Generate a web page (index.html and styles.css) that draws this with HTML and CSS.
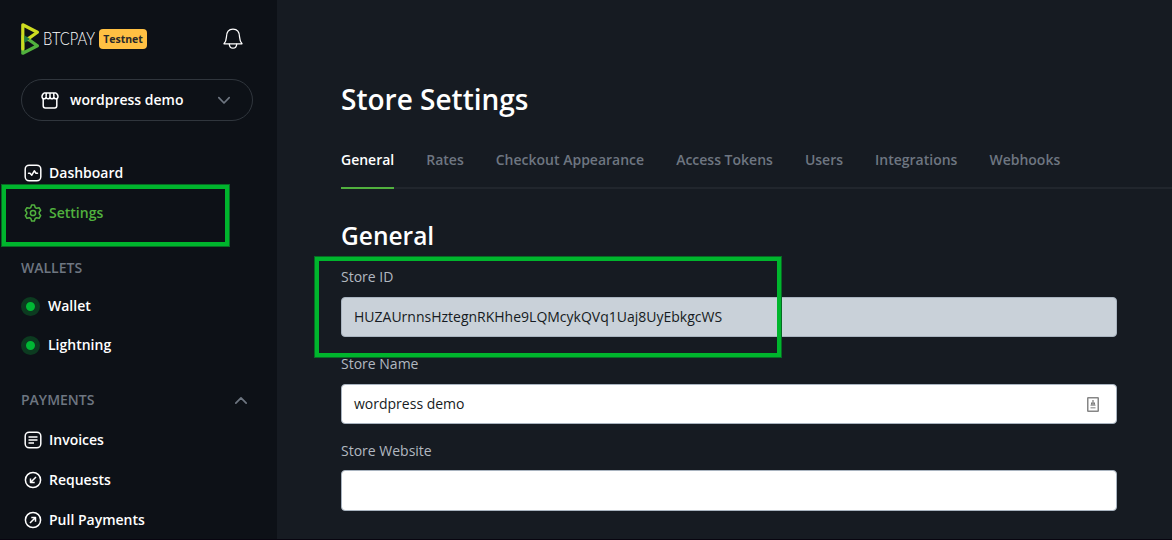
FILE: index.html
```html
<!DOCTYPE html>
<html lang="en">
<head>
<meta charset="utf-8">
<title>Store Settings</title>
<link rel="stylesheet" href="styles.css">
</head>
<body>
<div class="app">
  <aside class="sidebar">
    <header class="brand">
      <svg class="logo" width="18" height="32" viewBox="0 0 18 32" fill="none" stroke-linejoin="round" stroke-linecap="round">
        <path d="M1.800 30.200V13M1.800 30.200L16.400 22.800L6 15.400" stroke="#51b13e" stroke-width="3.200"/>
        <path d="M1.800 26V1.800L16.400 9.200L6 16.600" stroke="#cedc21" stroke-width="3.200"/>
        <path d="M3.400 12.300L9 16L3.400 20Z" fill="#1e7a44"/>
      </svg>
      <svg class="wordmark" width="56" height="24" viewBox="0 0 56 24"><text x="1" y="18" textLength="52" lengthAdjust="spacingAndGlyphs">BTCPAY</text></svg>
      <span class="badge">Testnet</span>
      <svg class="bell" width="20" height="22" viewBox="0 0 20 22" fill="none" stroke="#fff" stroke-width="1.300" stroke-linejoin="round" stroke-linecap="round">
        <path d="M1 15.800C2.600 14 3.200 12.400 3.400 9.200C3.500 4.300 5.600 1.200 10 1.200S16.500 4.300 16.600 9.200C16.800 12.400 17.400 14 19 15.800Z"/>
        <path d="M6.300 16.200C6.500 18.800 7.800 20.200 10 20.200S13.500 18.800 13.700 16.200"/>
      </svg>
    </header>
    <div class="store-picker">
      <svg width="18" height="17" viewBox="0 0 18 17" fill="none" stroke="#fff" stroke-width="1.500" stroke-linejoin="round">
        <path d="M3.300 1H14.700C15.500 1 17 3.200 17 4.400C17 7.500 12.900 7.500 12.900 4.400C12.900 7.500 9 7.500 9 4.400C9 7.500 5.100 7.500 5.100 4.400C5.100 7.500 1 7.500 1 4.400C1 3.200 2.500 1 3.300 1ZM5.300 1L5.100 4.400M9 1V4.400M12.700 1L12.900 4.400"/>
        <path d="M2.200 6.700V13.800Q2.200 15.900 4.300 15.900H13.700Q15.800 15.900 15.800 13.800V6.700"/>
      </svg>
      <span class="store-name">wordpress demo</span>
      <svg width="14" height="9" viewBox="0 0 14 9" fill="none" stroke="#6e7681" stroke-width="1.700" stroke-linecap="round" stroke-linejoin="round"><path d="M1.800 1.700L7 7L12.200 1.700"/></svg>
    </div>
    <nav class="menu menu-main">
      <a class="item"><svg width="18" height="18" viewBox="0 0 18 18" fill="none" stroke="currentColor" stroke-width="1.500" stroke-linejoin="round" stroke-linecap="round"><rect x="1.200" y="1.200" width="15.600" height="15.600" rx="4"/><path d="M4.500 9.200H6L7.800 11.200L10.300 6.800L12 9.200H13.500"/></svg>Dashboard</a>
      <a class="item active"><svg width="18" height="18" viewBox="0 0 18 18" fill="none" stroke="currentColor" stroke-width="1.500" stroke-linejoin="round"><path d="M7.600 1.100H10.400L11.200 3.500L12.600 4.300L15.100 3.700L16.700 6.300L15.200 8.200V9.800L16.700 11.700L15.100 14.300L12.600 13.700L11.200 14.500L10.400 16.900H7.600L6.800 14.500L5.400 13.700L2.900 14.300L1.300 11.700L2.800 9.800V8.200L1.300 6.300L2.900 3.700L5.400 4.300L6.800 3.500Z"/><circle cx="9" cy="9" r="2.600"/></svg>Settings</a>
    </nav>
    <h3 class="section">WALLETS</h3>
    <nav class="menu wallets">
      <a class="item"><span class="status"></span>Wallet</a>
      <a class="item"><span class="status"></span>Lightning</a>
    </nav>
    <h3 class="section payments">PAYMENTS
      <svg width="14" height="9" viewBox="0 0 14 9" fill="none" stroke="#6e7681" stroke-width="1.700" stroke-linecap="round" stroke-linejoin="round"><path d="M1.800 7.200L7 1.900L12.200 7.200"/></svg>
    </h3>
    <nav class="menu">
      <a class="item"><svg width="18" height="18" viewBox="0 0 18 18" fill="none" stroke="currentColor" stroke-width="1.500"><rect x="1.200" y="1.200" width="15.600" height="15.600" rx="4"/><path d="M4.500 6H13.500M4.500 9H13.500M4.500 12H10"/></svg>Invoices</a>
      <a class="item"><svg width="18" height="18" viewBox="0 0 18 18" fill="none" stroke="currentColor" stroke-width="1.500" stroke-linejoin="round"><circle cx="9" cy="9" r="7.600"/><path d="M12 6L6.500 11.500M6.500 7.500V11.500H10.700"/></svg>Requests</a>
      <a class="item"><svg width="18" height="18" viewBox="0 0 18 18" fill="none" stroke="currentColor" stroke-width="1.500" stroke-linejoin="round"><circle cx="9" cy="9" r="7.600"/><path d="M6 12L11.500 6.500M7.300 6.500H11.500V10.700"/></svg>Pull Payments</a>
    </nav>
    <div class="marker marker-settings"></div>
  </aside>
  <main class="content">
    <h1>Store Settings</h1>
    <nav class="tabs">
      <a class="tab current">General</a><a class="tab">Rates</a><a class="tab">Checkout Appearance</a><a class="tab">Access Tokens</a><a class="tab">Users</a><a class="tab">Integrations</a><a class="tab">Webhooks</a>
    </nav>
    <h2>General</h2>
    <form class="form">
      <div class="field"><label>Store ID</label><div class="input readonly"><span class="store-id">HUZAUrnnsHztegnRKHhe9LQMcykQVq1Uaj8UyEbkgcWS</span></div></div>
      <div class="field"><label>Store Name</label><div class="input"><span>wordpress demo</span>
        <svg width="12" height="15" viewBox="0 0 12 15"><rect x="0.750" y="0.750" width="10.500" height="13.500" rx="0.500" fill="#fff" stroke="#868686" stroke-width="1.500"/><path d="M6 3V8M4.600 5.500V8M7.400 5.500V8" stroke="#777" stroke-width="1.200"/><path d="M3.500 8.300H8.500M3.500 10.700H8.500" stroke="#aaa" stroke-width="1.400"/></svg></div></div>
      <div class="field website"><label>Store Website</label><div class="input"></div></div>
    </form>
    <div class="marker marker-id"></div>
  </main>
</div>
</body>
</html>
```
FILE: styles.css
```css
* { box-sizing: border-box; }
body { margin: 0; background: #161b22; color: #fff; font: 14px/20px "Open Sans", "Noto Sans", sans-serif; }
h1, h2, h3 { margin: 0; font-weight: 600; }
svg { display: block; flex: none; }
.app { display: flex; height: 540px; overflow: hidden; border-bottom: 1px solid #080510; }
.sidebar { position: relative; flex: none; width: 277px; padding: 22px 24px 0 21px; background: #0d1117; }
.brand { display: flex; align-items: center; height: 34px; }
.wordmark { margin-left: 3px; }
.wordmark text { font: 300 17px Lato, sans-serif; fill: #fff; }
.badge { margin-left: 1px; width: 48px; height: 20px; border-radius: 4px; background: #ffc043; color: #292929; font-size: 10.500px; font-weight: 700; line-height: 20px; text-align: center; }
.bell { margin-left: 76px; }
.store-picker { display: flex; align-items: center; width: 232px; height: 42px; margin-top: 23px; padding: 0 21px 0 19px; border: 1px solid #30363d; border-radius: 21px; }
.store-name { flex: 1; margin-left: 11px; font-weight: 600; }
.menu { display: flex; flex-direction: column; gap: 20px; }
.menu-main { margin-top: 42px; }
.item { display: flex; align-items: center; height: 20px; padding-left: 3px; gap: 7px; font-weight: 600; }
.active { color: #51b13e; }
.section { display: flex; align-items: center; justify-content: space-between; height: 20px; margin-top: 35px; color: #6e7681; font-size: 14px; }
.section svg { margin-right: 5px; }
.wallets { gap: 19px; margin-top: 18px; }
.wallets .item { padding-left: 0; gap: 8px; }
.status { width: 19px; height: 19px; border: 5px solid #0c3b20; border-radius: 50%; background: #00b834; }
.payments { margin-bottom: 20px; }
.content { position: relative; flex: 1; min-width: 0; padding: 79px 0 0 64px; }
h1 { font-size: 28px; line-height: 40px; }
.tabs { display: flex; gap: 32px; height: 39px; margin-top: 31px; border-bottom: 2px solid #21262d; color: #6e7681; }
.tab { height: 39px; font-weight: 600; white-space: nowrap; }
.current { color: #fff; border-bottom: 2px solid #51b13e; }
h2 { margin-top: 31px; font-size: 24.500px; line-height: 32px; }
.form { display: flex; flex-direction: column; gap: 17px; width: 776px; margin-top: 15px; }
.field { display: flex; flex-direction: column; gap: 10px; }
.field label { color: #b1b8c0; }
.input { display: flex; align-items: center; justify-content: space-between; height: 40px; padding: 0 17px 0 12px; border: 1px solid #a9b4c0; border-radius: 4px; background: #fff; color: #161b22; }
.website { gap: 9px; }
.website .input { height: 41px; }
.readonly { background: #c9d1d9; }
.marker { position: absolute; border: 5px solid #00b52d; outline: 1px solid #076b24; outline-offset: -1px; }
.marker-settings { left: 1px; top: 184px; width: 229px; height: 63px; }
.marker-id { left: 37px; top: 256px; width: 468px; height: 102px; }
```
